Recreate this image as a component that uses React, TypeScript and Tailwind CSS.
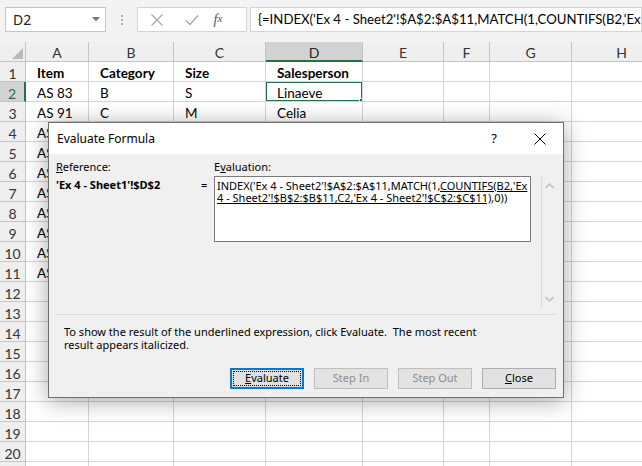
const cols = ["A", "B", "C", "D", "E", "F", "G", "H"];

// only the cells that show from behind the dialog are filled in
const rows: string[][] = [
  ["Item", "Category", "Size", "Salesperson"],
  ["AS 83", "B", "S", "Linaeve"],
  ["AS 91", "C", "M", "Celia"],
  ["AS"],
  ["AS"],
  ["AS"],
  ["AS"],
  ["AS"],
  ["AS"],
  ["AS"],
  ["AS"],
];

const ROW_COUNT = 21;

function CloseX() {
  return (
    <svg width="12" height="12" viewBox="0 0 12 12">
      <path d="M0.5 0.5L11.5 11.5M11.5 0.5L0.5 11.5" stroke="#000" strokeWidth="1" />
    </svg>
  );
}

function Chevron({ up }: { up?: boolean }) {
  return (
    <svg width="9" height="6" viewBox="0 0 9 6">
      <path d={up ? "M0.5 5L4.5 1L8.5 5" : "M0.5 1L4.5 5L8.5 1"} fill="none" stroke="#c2c2c2" strokeWidth="1.6" />
    </svg>
  );
}

function FormulaBar() {
  return (
    <div className="h-[42px] bg-[#f3f3f3] flex items-start pt-[7px] pl-[5px] font-['Lato',sans-serif]">
      <div className="w-[101px] h-[25px] bg-white border border-[#c6c6c6] flex items-center pl-[7px] pr-[5px]">
        <span className="flex-1 text-[14px] text-[#222] font-['Segoe_UI','Noto_Sans',sans-serif]">D2</span>
        <svg width="8" height="5" viewBox="0 0 8 5">
          <path d="M0 0H8L4 4.5Z" fill="#7a7a7a" />
        </svg>
      </div>
      <div className="w-[31px] h-[25px] flex flex-col items-center justify-center gap-[2px]">
        <span className="w-[2px] h-[2px] bg-[#b0b0b0]" />
        <span className="w-[2px] h-[2px] bg-[#b0b0b0]" />
        <span className="w-[2px] h-[2px] bg-[#b0b0b0]" />
      </div>
      <div className="w-[110px] h-[25px] bg-white border border-[#d4d4d4] flex items-center">
        <div className="w-[38px] flex justify-center">
          <svg width="12" height="12" viewBox="0 0 12 12">
            <path d="M0.5 0.5L11.5 11.5M11.5 0.5L0.5 11.5" stroke="#a6a6a6" strokeWidth="1.2" />
          </svg>
        </div>
        <div className="w-[32px] flex justify-center">
          <svg width="14" height="12" viewBox="0 0 14 12">
            <path d="M1 6.5L5 10.5L13 1.5" fill="none" stroke="#a6a6a6" strokeWidth="1.3" />
          </svg>
        </div>
        <div className="w-[20px] flex justify-center text-[14px] italic text-[#555] font-['Liberation_Serif',serif] leading-none">
          f<span className="text-[11px]">x</span>
        </div>
      </div>
      <div className="flex-1 h-[25px] ml-[3px] bg-white border border-[#d4d4d4] flex items-center pl-[7px] pt-px overflow-hidden whitespace-nowrap text-[13.2px] text-black">
        {"{=INDEX('Ex 4 - Sheet2'!$A$2:$A$11,MATCH(1,COUNTIFS(B2,'Ex 4 - Sheet2'!$B$2:$B$11,C2,'Ex 4 - Sheet2'!$C$2:$C$11),0))}"}
      </div>
    </div>
  );
}

function Sheet() {
  return (
    <div className="w-[672px] grid grid-cols-[26px_63px_85px_92px_97px_81px_46px_82px_100px] font-['Lato',sans-serif] text-[13.5px] text-black">
      <div className="h-5 bg-[#efefef] border-r border-b border-[#c4c4c4] flex items-end justify-end p-[2px]">
        <svg width="11" height="11" viewBox="0 0 11 11">
          <path d="M11 0V11H0Z" fill="#b9b9b9" />
        </svg>
      </div>
      {cols.map((c) => (
        <div
          key={c}
          className={
            c === "D"
              ? "h-5 pt-[2px] bg-[#d2d2d2] border-r border-[#c4c4c4] border-b-2 border-b-[#217346] flex items-center justify-center text-[14px] text-[#222]"
              : "h-5 pt-[2px] bg-[#efefef] border-r border-b border-[#c4c4c4] flex items-center justify-center text-[14px] text-[#333]"
          }
        >
          {c}
        </div>
      ))}
      {Array.from({ length: ROW_COUNT }).map((_, i) => {
        const r = i + 1;
        const data = rows[i] || [];
        return [
          <div
            key={"h" + r}
            className={
              r === 2
                ? "h-5 pt-[3px] bg-[#d2d2d2] border-b border-[#c4c4c4] border-r-2 border-r-[#217346] flex items-center justify-center text-[14px] text-[#217346]"
                : "h-5 pt-[3px] bg-[#efefef] border-r border-b border-[#c4c4c4] flex items-center justify-center text-[14px] text-[#333]"
            }
          >
            {r}
          </div>,
          ...cols.map((c, ci) => (
            <div
              key={c + r}
              className={
                "h-5 pt-[3px] border-r border-b border-[#d4d4d4] flex items-center pl-[11px] whitespace-nowrap overflow-hidden relative" +
                (r === 1 ? " font-bold" : "")
              }
            >
              {data[ci] || ""}
              {c === "D" && r === 2 && (
                <div className="absolute -left-[1px] -top-[1px] -right-[1px] -bottom-[1px] border-2 border-[#217346]">
                  <div className="absolute -right-[4px] -bottom-[4px] w-[6px] h-[6px] bg-[#217346] border border-white" />
                </div>
              )}
            </div>
          )),
        ];
      })}
    </div>
  );
}

function Btn({ label, u, disabled, focus }: { label: string; u?: number; disabled?: boolean; focus?: boolean }) {
  const text =
    u === undefined ? (
      label
    ) : (
      <>
        {label.slice(0, u)}
        <span className="underline">{label[u]}</span>
        {label.slice(u + 1)}
      </>
    );
  if (focus) {
    return (
      <div className="w-[74px] h-[21px] border-2 border-[#0078d7] bg-[#e1e1e1] p-[1px]">
        <div className="w-full h-full border border-dotted border-black flex items-center justify-center">{text}</div>
      </div>
    );
  }
  return (
    <div
      className={
        "w-[74px] h-[21px] border flex items-center justify-center " +
        (disabled ? "border-[#bfbfbf] bg-[#e3e3e3] text-[#8d8d8d]" : "border-[#adadad] bg-[#e1e1e1] text-black")
      }
    >
      {text}
    </div>
  );
}

function Dialog() {
  return (
    <div className="absolute left-[48px] top-[122px] w-[516px] h-[276px] border border-[#707070] bg-[#f0f0f0] shadow-[0_3px_22px_rgba(0,0,0,0.35)] flex flex-col font-['Segoe_UI','Noto_Sans',sans-serif] text-[11px] text-black">
      <div className="h-[31px] bg-white flex items-center pl-[8px]">
        <span className="flex-1 text-[12px]">Evaluate Formula</span>
        <span className="w-[46px] text-center text-[13px]">?</span>
        <span className="w-[46px] flex justify-center">
          <CloseX />
        </span>
      </div>
      <div className="flex-1 flex flex-col px-[7px]">
        <div className="flex items-start pt-[6px]">
          <div className="w-[145px] flex flex-col leading-[13px]">
            <span>
              <span className="underline">R</span>eference:
            </span>
            <span className="mt-[5px] font-bold whitespace-nowrap">'Ex 4 - Sheet1'!$D$2</span>
          </div>
          <div className="w-[13px] mt-[18px] leading-[13px]">=</div>
          <div className="w-[317px] flex flex-col">
            <span className="leading-[13px]">
              E<span className="underline">v</span>aluation:
            </span>
            <div className="mt-[3px] h-[66px] bg-white border border-[#7a7a7a] pl-[2px] pt-[3px] leading-[12px] whitespace-nowrap">
              <div>
                INDEX('Ex 4 - Sheet2'!$A$2:$A$11,MATCH(1,<span className="underline">COUNTIFS(B2,'Ex</span>
              </div>
              <div>
                <span className="underline">4 - Sheet2'!$B$2:$B$11,C2,'Ex 4 - Sheet2'!$C$2:$C$11)</span>,0))
              </div>
            </div>
          </div>
          <div className="ml-[10px] mt-[17px] w-[15px] h-[131px] border-l border-[#dadada] flex flex-col items-center justify-between py-[6px]">
            <Chevron up />
            <Chevron />
          </div>
        </div>
        <div className="mt-[6px] h-px bg-[#dcdcdc]" />
        <div className="mt-[10px] pl-[8px] leading-[13px]">
          <div>To show the result of the underlined expression, click Evaluate.&nbsp; The most recent</div>
          <div>result appears italicized.</div>
        </div>
        <div className="mt-auto mb-[8px] flex justify-end gap-[10px]">
          <Btn label="Evaluate" u={0} focus />
          <Btn label="Step In" disabled />
          <Btn label="Step Out" disabled />
          <Btn label="Close" u={0} />
        </div>
      </div>
    </div>
  );
}

export default function App() {
  return (
    <div className="w-[642px] h-[466px] relative overflow-hidden bg-white">
      <FormulaBar />
      <Sheet />
      <Dialog />
    </div>
  );
}
